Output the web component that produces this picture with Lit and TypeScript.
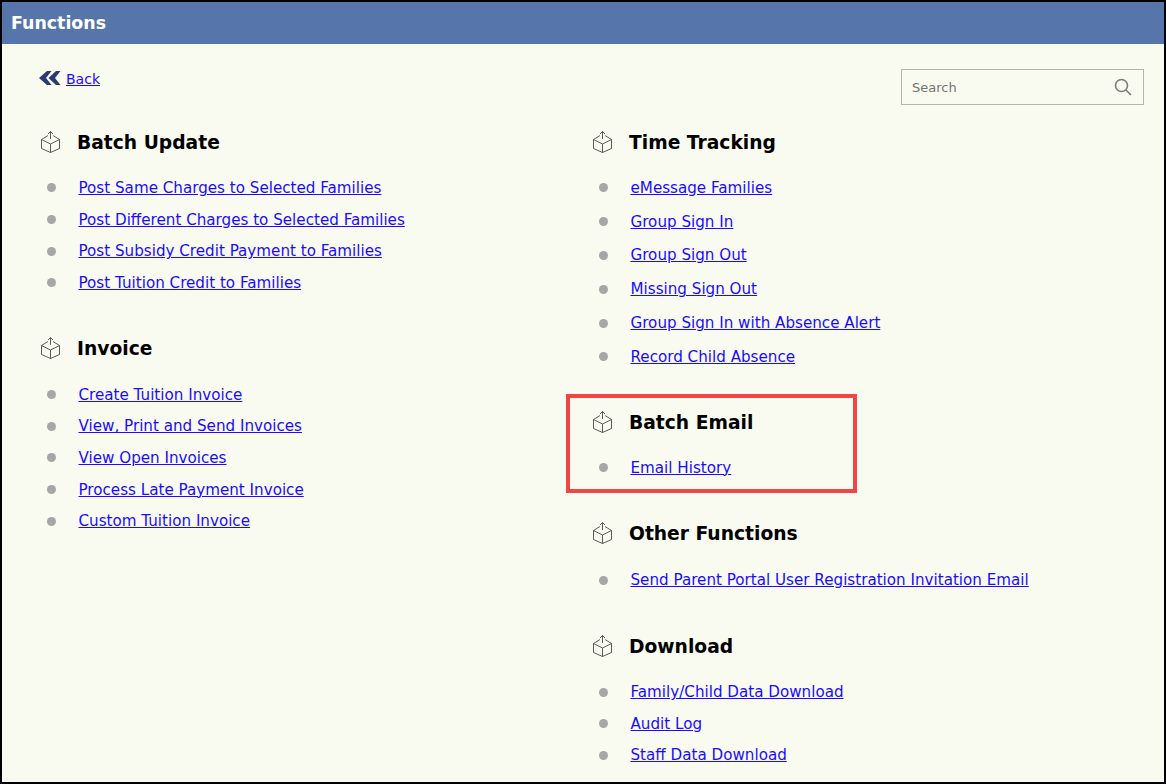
import { LitElement, html, css } from "lit";
import { customElement } from "lit/decorators.js";

const cube = html`<svg class="cube" viewBox="0 0 19 22" width="19" height="22" fill="none" stroke="#4a4a4a" stroke-width="0.9">
  <path d="M9.500 0.500V8M7 3L9.500 0.500L12 3"/>
  <path d="M7 4.500L0.500 8.500V17.500L9.500 21.500L18.500 17.500V8.500L12 4.500"/>
  <path d="M0.500 8.500L9.500 13L18.500 8.500M9.500 13V21.500"/>
</svg>`;

interface Section { title: string; links: string[]; tall?: boolean; mark?: boolean; drop?: boolean; gap: number; }

const left: Section[] = [
  { title: "Batch Update", gap: 0, links: ["Post Same Charges to Selected Families", "Post Different Charges to Selected Families", "Post Subsidy Credit Payment to Families", "Post Tuition Credit to Families"] },
  { title: "Invoice", gap: 37, drop: true, links: ["Create Tuition Invoice", "View, Print and Send Invoices", "View Open Invoices", "Process Late Payment Invoice", "Custom Tuition Invoice"] },
];
const right: Section[] = [
  { title: "Time Tracking", gap: 0, tall: true, links: ["eMessage Families", "Group Sign In", "Group Sign Out", "Missing Sign Out", "Group Sign In with Absence Alert", "Record Child Absence"] },
  { title: "Batch Email", gap: 36, mark: true, links: ["Email History"] },
  { title: "Other Functions", gap: 38, drop: true, links: ["Send Parent Portal User Registration Invitation Email"] },
  { title: "Download", gap: 38, links: ["Family/Child Data Download", "Audit Log", "Staff Data Download"] },
];

@customElement("app-root")
export class AppRoot extends LitElement {
  static styles = css`
    :host { display: block; width: 1166px; height: 784px; box-sizing: border-box; border: 2px solid #000; background: #f9faf0; overflow: hidden; font-family: "DejaVu Sans", Verdana, sans-serif; }
    .bar { height: 42px; background: #5676ab; color: #fff; font-weight: 700; font-size: 17.4px; line-height: 42px; padding-left: 9px; }
    .top { display: flex; justify-content: space-between; align-items: flex-start; padding: 25px 20px 0 37px; }
    .back { display: flex; align-items: center; gap: 5px; font-size: 14px; line-height: 20px; }
    .back svg { display: block; margin-top: -3px; }
    a { color: #1a0dff; text-decoration: underline; }
    .search { width: 243px; height: 36px; box-sizing: border-box; border: 1px solid #b4b4ac; display: flex; align-items: center; justify-content: space-between; padding: 0 11px 0 10px; font-size: 13px; color: #757575; }
    .cols { display: grid; grid-template-columns: 552px 1fr; padding-left: 37px; margin-top: 25px; }
    .sec { position: relative; }
    .head { display: flex; align-items: center; height: 26px; padding-left: 2px; }
    .cube { display: block; margin-right: 17px; margin-top: -2px; flex: none; }
    .head h2 { margin: 0; font-size: 18.7px; line-height: 26px; font-weight: 700; color: #000; }
    ul { list-style: none; margin: 16px 0 0; padding: 0; }
    .tall ul { margin-top: 15px; }
    .drop ul { margin-top: 17px; }
    li { height: 31.7px; display: flex; align-items: center; font-size: 15.15px; }
    .tall li { height: 33.8px; }
    .dot { width: 9px; height: 9px; border-radius: 50%; background: #a6a6a6; margin: 0 23px 0 7.500px; flex: none; }
    .mark { position: absolute; left: -25px; top: -16px; width: 291px; height: 99px; box-sizing: border-box; border: 4px solid #f44545; pointer-events: none; }
  `;

  private sec(s: Section) {
    return html`<section class="sec ${s.tall ? "tall" : ""} ${s.drop ? "drop" : ""}" style="margin-top:${s.gap}px">
      <div class="head">${cube}<h2>${s.title}</h2></div>
      <ul>${s.links.map((l) => html`<li><span class="dot"></span><a href="#">${l}</a></li>`)}</ul>
      ${s.mark ? html`<div class="mark"></div>` : ""}
    </section>`;
  }

  render() {
    return html`
      <div class="bar">Functions</div>
      <div class="top">
        <div class="back">
          <svg width="22" height="14" viewBox="0 0 22 14" fill="#2c3a6e"><path d="M8 0h4.500L7 7l5.500 7H8L0 7z"/><path d="M17 0h4.500L16 7l5.500 7H17L9.500 7z"/></svg>
          <a href="#">Back</a>
        </div>
        <div class="search">
          <span>Search</span>
          <svg width="18" height="18" viewBox="0 0 18 18" fill="none" stroke="#7d7d78" stroke-width="1.600"><circle cx="7.500" cy="7.500" r="6"/><path d="M12 12l5 5"/></svg>
        </div>
      </div>
      <div class="cols">
        <div>${left.map((s) => this.sec(s))}</div>
        <div>${right.map((s) => this.sec(s))}</div>
      </div>`;
  }
}
